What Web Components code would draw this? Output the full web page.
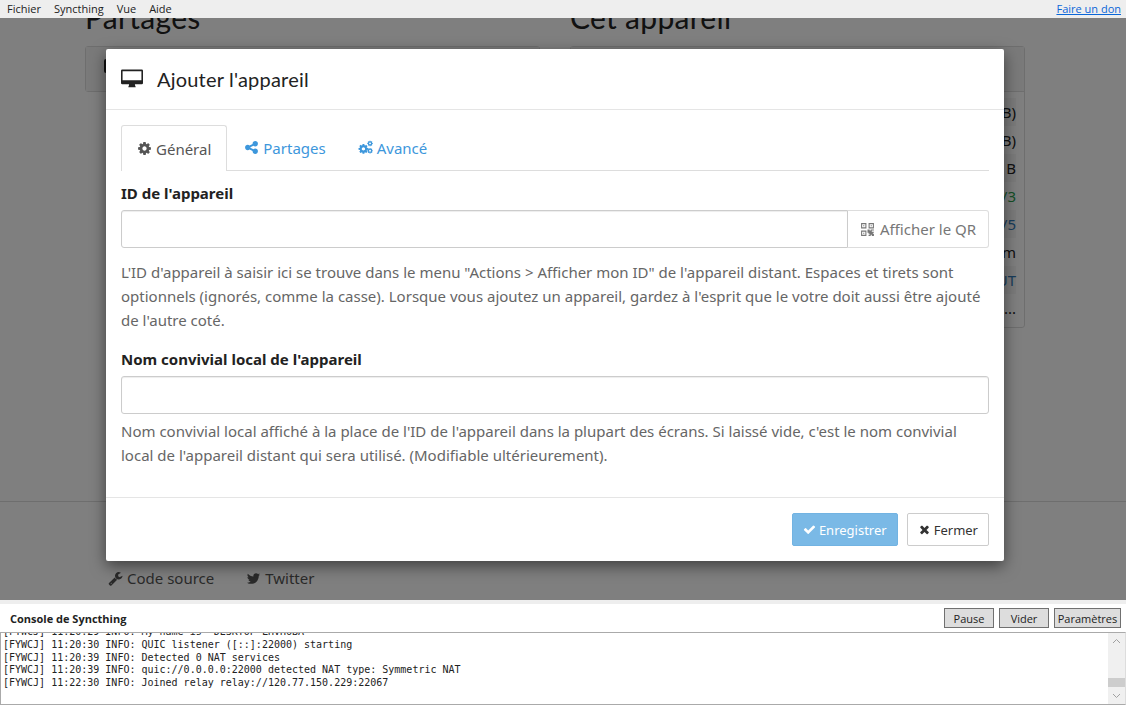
<!DOCTYPE html>
<html lang="fr">
<head>
<meta charset="utf-8">
<title>Syncthing</title>
<style>
  html, body { margin: 0; padding: 0; height: 100%; overflow: hidden; background: #fff; }
  body { font-family: "Noto Sans", "Open Sans", sans-serif; }
</style>
</head>
<body>

<sync-app>
  <menu-bar slot="menu"></menu-bar>
  <page-view slot="page">
    <add-device-modal></add-device-modal>
  </page-view>
  <log-console slot="console"></log-console>
</sync-app>

<script>
// font-awesome 4 glyphs, 1792 grid
const ICONS = {
  cog: 'M1152 896q0-106-75-181t-181-75-181 75-75 181 75 181 181 75 181-75 75-181zm512-109v222q0 12-8 23t-20 13l-185 28q-19 54-39 91 35 50 107 138 10 12 10 25t-9 23q-27 37-99 108t-94 71q-12 0-26-9l-138-108q-44 23-91 38-16 136-29 186-7 28-36 28h-222q-14 0-24.5-8.5t-11.5-21.5l-28-184q-49-16-90-37l-141 107q-10 9-25 9-14 0-25-11-126-114-165-168-7-10-7-23 0-12 8-23 15-21 51-66.5t54-70.5q-27-50-41-99l-183-27q-13-2-21-12.5t-8-23.5v-222q0-12 8-23t19-13l186-28q14-46 39-92-40-57-107-138-10-12-10-24 0-10 9-23 26-36 98.5-107.5t94.5-71.5q13 0 26 10l138 107q44-23 91-38 16-136 29-186 7-28 36-28h222q14 0 24.5 8.5t11.5 21.5l28 184q49 16 90 37l142-107q9-9 24-9 13 0 25 10 129 119 165 170 7 8 7 22 0 12-8 23-15 21-51 66.5t-54 70.5q26 50 41 98l183 28q13 2 21 12.5t8 23.5z',
  share: 'M1344 1024q133 0 226.5 93.5t93.5 226.5-93.5 226.5-226.5 93.5-226.5-93.5-93.5-226.5q0-12 2-34l-360-180q-92 86-218 86-133 0-226.5-93.5t-93.5-226.5 93.5-226.5 226.5-93.5q126 0 218 86l360-180q-2-22-2-34 0-133 93.5-226.5t226.5-93.5 226.5 93.5 93.5 226.5-93.5 226.5-226.5 93.5q-126 0-218-86l-360 180q2 22 2 34t-2 34l360 180q92-86 218-86z',
  wrench: 'M448 1472q0-26-19-45t-45-19-45 19-19 45 19 45 45 19 45-19 19-45zm644-420l-682 682q-37 37-90 37-52 0-91-37l-106-108q-38-36-38-90 0-53 38-91l681-681q39 98 114.5 173.5t173.5 114.5zm634-435q0 39-23 106-47 134-164.5 217.5t-258.5 83.5q-185 0-316.5-131.5t-131.5-316.5 131.5-316.5 316.5-131.5q58 0 121.5 16.5t107.5 46.5q16 11 16 28t-16 28l-293 169v224l193 107q5-3 79-48.5t135.5-81 70.5-35.5q15 0 23.5 10t8.5 25z',
  twitter: 'M1684 408q-67 98-162 167 1 14 1 42 0 130-38 259.5t-115.5 248.5-184.5 210.5-258 146-323 54.5q-271 0-496-145 35 4 78 4 225 0 401-138-105-2-188-64.5t-114-159.5q33 5 61 5 43 0 85-11-112-23-185.5-111.5t-73.5-205.5v-4q68 38 146 41-66-44-105-115t-39-154q0-88 44-163 121 149 294.5 238.5t371.5 99.5q-8-38-8-74 0-134 94.5-228.5t228.5-94.5q140 0 236 102 109-21 200-76-35 110-132 172 87-9 174-48z',
  check: 'M1671 566q0 40-28 68l-724 724-136 136q-28 28-68 28t-68-28l-136-136-362-362q-28-28-28-68t28-68l136-136q28-28 68-28t68 28l294 295 656-657q28-28 68-28t68 28l136 136q28 28 28 68z',
  times: 'M1490 1322q0 40-28 68l-136 136q-28 28-68 28t-68-28l-294-294-294 294q-28 28-68 28t-68-28l-136-136q-28-28-28-68t28-68l294-294-294-294q-28-28-28-68t28-68l136-136q28-28 68-28t68 28l294 294 294-294q28-28 68-28t68 28l136 136q28 28 28 68t-28 68l-294 294 294 294q28 28 28 68z',
  desktop: 'M100 128h1592q100 0 100 100v1000q0 100-100 100h-560q0 90 60 190v50h-592v-50q60-100 60-190h-560q-100 0-100-100v-1000q0-100 100-100zM128 256v750h1536v-750z',
  qrcode: 'M128 128h640v640h-640zM256 256v384h384v-384zM384 384h128v128h-128zM1024 128h640v640h-640zM1152 256v384h384v-384zM1280 384h128v128h-128zM128 1024h640v640h-640zM256 1152v384h384v-384zM384 1280h128v128h-128zM896 896h256v128h128v-128h384v128h-256v128h256v128h-128v128h128v256h-256v-128h-128v128h-256v-128h128v-128h-128v-128h-128z'
};

class FaIcon extends HTMLElement {
  constructor() {
    super();
    this.attachShadow({ mode: 'open' });
    const name = this.getAttribute('name');
    let inner = `<path d="${ICONS[name]}"/>`;
    // cogs is one big gear and two small ones
    if (name === 'cogs') {
      inner = `<g transform="translate(-40 340) scale(.82)"><path d="${ICONS.cog}"/></g>
        <g transform="translate(1130 -40) scale(.46)"><path d="${ICONS.cog}"/></g>
        <g transform="translate(1130 900) scale(.46)"><path d="${ICONS.cog}"/></g>`;
    }
    const vb = name === 'cogs' ? '0 0 1920 1792' : '0 0 1792 1792';
    this.shadowRoot.innerHTML = `
      <style>
        :host { display: inline-block; width: 1em; height: 1em; line-height: 0; flex: none; }
        svg { width: 100%; height: 100%; fill: currentColor; fill-rule: evenodd; display: block; }
      </style>
      <svg viewBox="${vb}">${inner}</svg>`;
  }
}

class SyncApp extends HTMLElement {
  constructor() {
    super();
    this.attachShadow({ mode: 'open' });
    this.shadowRoot.innerHTML = `
      <style>
        :host { display: grid; grid-template-rows: 18px 582px 1fr; height: 705px; width: 1126px; overflow: hidden; }
      </style>
      <slot name="menu"></slot>
      <slot name="page"></slot>
      <slot name="console"></slot>`;
  }
}

class MenuBar extends HTMLElement {
  constructor() {
    super();
    this.attachShadow({ mode: 'open' });
    this.shadowRoot.innerHTML = `
      <style>
        :host {
          display: flex; align-items: center; justify-content: space-between;
          height: 18px; background: #eee; padding: 0 5px 0 7px; box-sizing: border-box;
          font: 11px/18px "Open Sans", sans-serif; color: #222;
        }
        nav { display: flex; gap: 13px; }
        a { color: #0a66d8; text-decoration: underline; }
      </style>
      <nav><span>Fichier</span><span>Syncthing</span><span>Vue</span><span>Aide</span></nav>
      <a>Faire un don</a>`;
  }
}

class PageView extends HTMLElement {
  constructor() {
    super();
    this.attachShadow({ mode: 'open' });
    this.shadowRoot.innerHTML = `
      <style>
        :host { display: block; position: relative; height: 582px; overflow: hidden; background: #fff; color: #222; font: 15px/24px "Noto Sans", sans-serif; }
        .columns { display: grid; grid-template-columns: 455px 455px; gap: 30px; padding: 0 101px 0 85px; margin-top: -21px; align-items: start; }
        h1 { font: 400 30px/40px Lato, sans-serif; margin: 0 0 9px; color: #222; letter-spacing: .3px; }
        .panel { border: 1px solid #ddd; border-radius: 3px; box-sizing: border-box; }
        .head { height: 44px; background: #f5f5f5; padding: 12px 18px; box-sizing: border-box; }
        .head i { display: block; width: 20px; height: 14px; background: #222; border-radius: 2px; }
        .right .head { border-bottom: 1px solid #ddd; height: 45px; }
        .rows { padding: 6px 8px 5px 6px; }
        .rows div { height: 28px; line-height: 28px; text-align: right; }
        .rows div:nth-child(odd) { background: #f7f7f7; }
        .green { color: #2ba14f; }
        .blue { color: #337ab7; }
        footer { margin-top: 173px; border-top: 1px solid #ddd; padding: 64px 0 0 108px; display: flex; gap: 32px; color: #555; }
        footer span { display: flex; align-items: center; gap: 4px; }
        .overlay { position: absolute; inset: 0; background: rgba(0,0,0,.5); }
      </style>
      <div class="columns">
        <section>
          <h1>Partages</h1>
          <div class="panel"><div class="head"><i></i></div></div>
        </section>
        <section class="right">
          <h1>Cet appareil</h1>
          <div class="panel">
            <div class="head"></div>
            <div class="rows">
              <div>B)</div><div>B)</div><div>B</div><div class="green">/3</div>
              <div class="blue">/5</div><div>m</div><div class="blue">UT</div><div>...</div>
            </div>
          </div>
        </section>
      </div>
      <footer>
        <span><fa-icon name="wrench"></fa-icon>Code source</span>
        <span><fa-icon name="twitter"></fa-icon>Twitter</span>
      </footer>
      <div class="overlay"></div>
      <slot></slot>`;
  }
}

class AddDeviceModal extends HTMLElement {
  constructor() {
    super();
    this.attachShadow({ mode: 'open' });
    this.shadowRoot.innerHTML = `
      <style>
        :host {
          display: block; position: absolute; left: 106px; top: 31px; width: 898px;
          background: #fff; border-radius: 2px; box-shadow: 0 5px 15px rgba(0,0,0,.5);
          font: 15px/24px "Noto Sans", sans-serif; color: #666;
        }
        header { display: flex; align-items: center; height: 60px; padding: 0 15px; border-bottom: 1px solid #e5e5e5; box-sizing: content-box; color: #222; }
        header fa-icon { font-size: 22px; margin-right: 14px; }
        h4 { margin: 0; font: 400 20px/28px Lato, sans-serif; letter-spacing: .2px; }
        .body { padding: 15px 15px 30px; }
        .tabs { display: flex; height: 45px; border-bottom: 1px solid #ddd; }
        .tab { display: flex; align-items: center; gap: 4px; padding: 0 15px; color: #3d97dc; margin-right: 2px; }
        .tab.on { color: #555; border: 1px solid #ddd; border-bottom: 0; background: #fff; height: 46px; border-radius: 3px 3px 0 0; box-sizing: border-box; }
        .tab fa-icon { font-size: 15px; }
        label { display: block; font-weight: 700; color: #222; margin: 10px 0 5px; }
        .group + .group label { margin-top: 15px; }
        .field { display: flex; height: 38px; }
        .input { flex: 1; border: 1px solid #ccc; border-radius: 3px; box-shadow: inset 0 1px 1px rgba(0,0,0,.075); box-sizing: border-box; background: #fff; }
        .field.addon .input { border-radius: 3px 0 0 3px; }
        .qr { display: flex; align-items: center; gap: 5px; width: 141px; padding: 0 12px; box-sizing: border-box; border: 1px solid #ddd; border-left: 0; border-radius: 0 3px 3px 0; color: #777; white-space: nowrap; }
        p { margin: 0; }
        .g1 p { margin-top: 12px; }
        .g2 p { margin-top: 5px; }
        .foot { display: flex; justify-content: flex-end; gap: 9px; border-top: 1px solid #e5e5e5; padding: 15px; }
        .btn { display: flex; align-items: center; gap: 3px; height: 33px; box-sizing: border-box; border: 1px solid #ccc; border-radius: 2px; padding: 0 10px; font-size: 13px; color: #333; }
        .btn.primary { background: #7ab9e6; border-color: #72b3e2; color: #fff; }
      </style>
      <header><fa-icon name="desktop"></fa-icon><h4>Ajouter l'appareil</h4></header>
      <div class="body">
        <div class="tabs">
          <div class="tab on"><fa-icon name="cog"></fa-icon>Général</div>
          <div class="tab"><fa-icon name="share"></fa-icon>Partages</div>
          <div class="tab"><fa-icon name="cogs"></fa-icon>Avancé</div>
        </div>
        <div class="group g1">
          <label>ID de l'appareil</label>
          <div class="field addon"><div class="input"></div><div class="qr"><fa-icon name="qrcode"></fa-icon>Afficher le QR</div></div>
          <p>L'ID d'appareil à saisir ici se trouve dans le menu "Actions &gt; Afficher mon ID" de l'appareil distant. Espaces et tirets sont optionnels (ignorés, comme la casse). Lorsque vous ajoutez un appareil, gardez à l'esprit que le votre doit aussi être ajouté de l'autre coté.</p>
        </div>
        <div class="group g2">
          <label>Nom convivial local de l'appareil</label>
          <div class="field"><div class="input"></div></div>
          <p>Nom convivial local affiché à la place de l'ID de l'appareil dans la plupart des écrans. Si laissé vide, c'est le nom convivial local de l'appareil distant qui sera utilisé. (Modifiable ultérieurement).</p>
        </div>
      </div>
      <div class="foot">
        <div class="btn primary"><fa-icon name="check"></fa-icon>Enregistrer</div>
        <div class="btn"><fa-icon name="times"></fa-icon>Fermer</div>
      </div>`;
  }
}

class LogConsole extends HTMLElement {
  constructor() {
    super();
    this.attachShadow({ mode: 'open' });
    this.shadowRoot.innerHTML = `
      <style>
        :host { display: block; background: #fff; border-top: 4px solid #eee; height: 105px; box-sizing: border-box; font: 11px "Open Sans", sans-serif; color: #222; }
        .top { display: flex; align-items: center; height: 28px; padding: 0 5px 0 10px; gap: 5px; }
        b { flex: 1; font-weight: 700; }
        button { width: 50px; height: 20px; padding: 0; border: 1px solid #707070; background: #ddd; font: inherit; color: #222; border-radius: 0; }
        button.wide { width: 67px; }
        .box { display: flex; height: 73px; border: 1px solid #aaa; border-right-color: #ddd; box-sizing: border-box; overflow: hidden; }
        pre { flex: 1; margin: -7px 0 0 2px; font: 10px/12.75px "DejaVu Sans Mono", monospace; color: #222; }
        .bar { display: flex; flex-direction: column; width: 17px; background: #f0f0f0; color: #a0a0a0; }
        .bar svg { width: 17px; height: 17px; fill: none; stroke: currentColor; stroke-width: 1; display: block; }
        .rail { flex: 1; display: flex; align-items: flex-end; padding-bottom: 0; }
        .thumb { width: 17px; height: 9px; background: #cdcdcd; }
      </style>
      <div class="top">
        <b>Console de Syncthing</b>
        <button>Pause</button><button>Vider</button><button class="wide">Paramètres</button>
      </div>
      <div class="box">
        <pre>[FYWCJ] 11:20:29 INFO: My name is "DESKTOP-LHVH6BA"
[FYWCJ] 11:20:30 INFO: QUIC listener ([::]:22000) starting
[FYWCJ] 11:20:39 INFO: Detected 0 NAT services
[FYWCJ] 11:20:39 INFO: quic://0.0.0.0:22000 detected NAT type: Symmetric NAT
[FYWCJ] 11:22:30 INFO: Joined relay relay://120.77.150.229:22067</pre>
        <div class="bar">
          <svg viewBox="0 0 17 17"><path d="M5 10l3.500-3.500L12 10"/></svg>
          <div class="rail"><div class="thumb"></div></div>
          <svg viewBox="0 0 17 17"><path d="M5 7l3.500 3.500L12 7"/></svg>
        </div>
      </div>`;
  }
}

customElements.define('fa-icon', FaIcon);
customElements.define('sync-app', SyncApp);
customElements.define('menu-bar', MenuBar);
customElements.define('page-view', PageView);
customElements.define('add-device-modal', AddDeviceModal);
customElements.define('log-console', LogConsole);
</script>
</body>
</html>
